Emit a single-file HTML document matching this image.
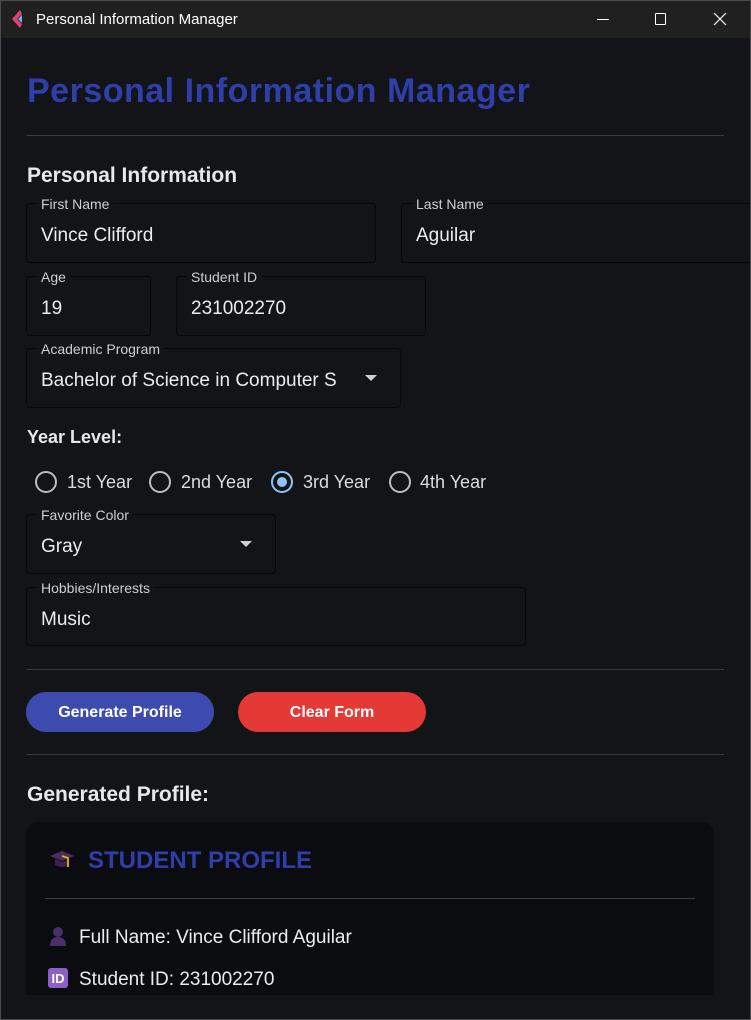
<!DOCTYPE html>
<html><head><meta charset="utf-8"><style>
*{margin:0;padding:0;box-sizing:border-box}
body{width:751px;height:1020px;background:#121418;font-family:"Liberation Sans",sans-serif;color:#e6e6e6;position:relative;overflow:hidden}
.a{position:absolute;white-space:nowrap}
.win{position:absolute;left:0;top:0;width:751px;height:1020px;border:1px solid #4a4a4a;pointer-events:none}
.tb{position:absolute;left:0;top:0;width:751px;height:38px;background:#202020}
.hr{position:absolute;height:1px;background:#3a3c41}
.f{position:absolute;border:1px solid #07080a;border-radius:4px}
.lb{position:absolute;top:-8px;left:10px;padding:0 4px;background:#121418;font-size:14px;color:#cfcfcf;line-height:16px;white-space:nowrap}
.v{position:absolute;left:14px;top:20px;font-size:19px;color:#ececec;line-height:24px;white-space:nowrap}
.arr{position:absolute;top:26px;width:0;height:0;border-left:6px solid transparent;border-right:6px solid transparent;border-top:6px solid #d0d0d0}
.h2{font-size:21px;font-weight:bold;color:#e8e8e8}
.rc{position:absolute;width:22px;height:22px;border:2px solid #bdbdbd;border-radius:50%;top:471px}
.rt{position:absolute;top:471px;font-size:18px;color:#dcdcdc;line-height:22px}
.btn{position:absolute;top:692px;width:188px;height:40px;border-radius:20px;color:#fff;font-weight:bold;font-size:16px;text-align:center;line-height:42px}
</style></head><body>
<div class="tb"></div>
<svg class="a" style="left:11px;top:10px" width="16" height="18" viewBox="0 0 16 18"><path d="M9 0 L1 9 L9 18 L11 14 L6 9 L11 4Z" fill="#e83e6c"/><path d="M11 5 L7 9 L11 13Z" fill="#4fc3f7"/></svg>
<div class="a" style="left:36px;top:11px;font-size:15px;color:#fff">Personal Information Manager</div>
<div class="a" style="left:597px;top:19px;width:12px;height:1px;background:#fff"></div>
<div class="a" style="left:655px;top:13px;width:11px;height:12px;border:1px solid #fff;border-radius:1px"></div>
<svg class="a" style="left:713px;top:12px" width="14" height="14"><path d="M1 1L13 13M13 1L1 13" stroke="#fff" stroke-width="1.2"/></svg>

<div class="a" style="left:27px;top:72px;font-size:34px;font-weight:bold;color:#2f3ea8;letter-spacing:0.5px">Personal Information Manager</div>
<div class="hr" style="left:27px;top:135px;width:697px"></div>
<div class="a h2" style="left:27px;top:164px">Personal Information</div>

<div class="f" style="left:26px;top:203px;width:350px;height:60px"><span class="lb">First Name</span><span class="v">Vince Clifford</span></div>
<div class="f" style="left:401px;top:203px;width:360px;height:60px"><span class="lb">Last Name</span><span class="v">Aguilar</span></div>
<div class="f" style="left:26px;top:276px;width:125px;height:60px"><span class="lb">Age</span><span class="v">19</span></div>
<div class="f" style="left:176px;top:276px;width:250px;height:60px"><span class="lb">Student ID</span><span class="v">231002270</span></div>
<div class="f" style="left:26px;top:348px;width:375px;height:60px"><span class="lb">Academic Program</span><span class="v" style="width:296px;overflow:hidden">Bachelor of Science in Computer Science</span><span class="arr" style="left:338px"></span></div>

<div class="a" style="left:27px;top:427px;font-size:18px;font-weight:bold;color:#e8e8e8">Year Level:</div>
<div class="rc" style="left:35px"></div><div class="rt" style="left:67px">1st Year</div>
<div class="rc" style="left:149px"></div><div class="rt" style="left:181px">2nd Year</div>
<div class="rc" style="left:271px;border-color:#90c4f9"><div style="position:absolute;left:4px;top:4px;width:10px;height:10px;border-radius:50%;background:#90c4f9"></div></div><div class="rt" style="left:303px">3rd Year</div>
<div class="rc" style="left:389px"></div><div class="rt" style="left:420px">4th Year</div>

<div class="f" style="left:26px;top:514px;width:250px;height:60px"><span class="lb">Favorite Color</span><span class="v">Gray</span><span class="arr" style="left:213px"></span></div>
<div class="f" style="left:26px;top:587px;width:500px;height:59px"><span class="lb">Hobbies/Interests</span><span class="v">Music</span></div>

<div class="hr" style="left:27px;top:669px;width:697px"></div>
<div class="btn" style="left:26px;background:#3c4bad">Generate Profile</div>
<div class="btn" style="left:238px;background:#e53935">Clear Form</div>
<div class="hr" style="left:27px;top:754px;width:697px"></div>
<div class="a h2" style="left:27px;top:783px">Generated Profile:</div>

<div class="a" style="left:26px;top:822px;width:688px;height:173px;background:#0b0c0f;border-radius:12px 12px 0 0"></div>
<svg class="a" style="left:49px;top:849px" width="26" height="24" viewBox="0 0 26 24"><path d="M1 7 L13 2 L25 7 L13 12Z" fill="#4a2f5e"/><path d="M6 10 L6 16 Q13 20 20 16 L20 10 L13 13Z" fill="#3a2450"/><path d="M13 7 L19 9 L19 18" stroke="#f5a623" stroke-width="1.8" fill="none"/></svg>
<div class="a" style="left:88px;top:847px;font-size:24px;font-weight:bold;color:#2f3ea8">STUDENT PROFILE</div>
<div class="a" style="left:45px;top:898px;width:650px;height:1px;background:#3e3f43"></div>
<svg class="a" style="left:49px;top:926px" width="18" height="20" viewBox="0 0 18 20"><circle cx="9" cy="6" r="5" fill="#4a2f6a"/><path d="M1 20 Q1 11 9 11 Q17 11 17 20Z" fill="#4a2f6a"/></svg>
<div class="a" style="left:79px;top:927px;font-size:19px;color:#ececec">Full Name: Vince Clifford Aguilar</div>
<svg class="a" style="left:48px;top:968px" width="20" height="20" viewBox="0 0 20 20"><rect width="20" height="20" rx="3" fill="#8e5fc8"/><text x="10" y="15" font-family="Liberation Sans" font-size="13" font-weight="bold" fill="#fff" text-anchor="middle">ID</text></svg>
<div class="a" style="left:79px;top:969px;font-size:19px;color:#ececec">Student ID: 231002270</div>
<div class="win"></div>
</body></html>
